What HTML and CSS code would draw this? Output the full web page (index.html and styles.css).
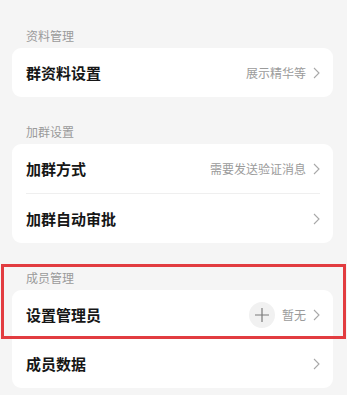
FILE: index.html
```html
<!DOCTYPE html>
<html lang="zh">
<head>
<meta charset="utf-8">
<link rel="stylesheet" href="styles.css">
</head>
<body>
<div class="page">
  <section class="section">
    <div class="label">资料管理</div>
    <div class="card">
      <div class="row">
        <span class="title">群资料设置</span>
        <span class="right"><span class="value">展示精华等</span><svg class="chev" viewBox="0 0 7 12"><path d="M1 1l5 5-5 5"/></svg></span>
      </div>
    </div>
  </section>
  <section class="section">
    <div class="label">加群设置</div>
    <div class="card">
      <div class="row">
        <span class="title">加群方式</span>
        <span class="right"><span class="value">需要发送验证消息</span><svg class="chev" viewBox="0 0 7 12"><path d="M1 1l5 5-5 5"/></svg></span>
      </div>
      <div class="divider"></div>
      <div class="row">
        <span class="title">加群自动审批</span>
        <span class="right"><svg class="chev" viewBox="0 0 7 12"><path d="M1 1l5 5-5 5"/></svg></span>
      </div>
    </div>
  </section>
  <section class="section highlighted">
    <div class="label">成员管理</div>
    <div class="card">
      <div class="row">
        <span class="title">设置管理员</span>
        <span class="right">
          <span class="plus"><svg viewBox="0 0 26 26"><path d="M13 6v14M6 13h14"/></svg></span>
          <span class="value">暂无</span><svg class="chev" viewBox="0 0 7 12"><path d="M1 1l5 5-5 5"/></svg>
        </span>
      </div>
      <div class="row">
        <span class="title">成员数据</span>
        <span class="right"><svg class="chev" viewBox="0 0 7 12"><path d="M1 1l5 5-5 5"/></svg></span>
      </div>
    </div>
  </section>
</div>
</body>
</html>
```
FILE: styles.css
```css
html, body {
  margin: 0;
  padding: 0;
  background: #ffffff;
}
body {
  width: 356px;
  height: 395px;
  overflow: hidden;
  font-family: "Noto Sans CJK SC", "Noto Sans", sans-serif;
}
.page {
  width: 347px;
  box-sizing: border-box;
  padding: 1px 14px 20px 12px;
  background: #f5f5f5;
}
.section {
  position: relative;
}
.label {
  height: 47px;
  box-sizing: border-box;
  padding: 0 0 2px 14px;
  display: flex;
  align-items: flex-end;
  font-size: 12px;
  line-height: 20px;
  color: #9a9a9a;
}
.card {
  background: #ffffff;
  border-radius: 9px;
}
.row {
  height: 49px;
  display: flex;
  align-items: center;
  justify-content: space-between;
  padding: 0 13px 0 14px;
}
.title {
  font-size: 15px;
  font-weight: 700;
  color: #161616;
}
.right {
  display: flex;
  align-items: center;
}
.value {
  font-size: 12px;
  color: #9b9b9b;
}
.chev {
  width: 7px;
  height: 12px;
  margin-left: 7px;
  fill: none;
  stroke: #a8a8a8;
  stroke-width: 1.1;
}
.divider {
  height: 1px;
  background: #efefef;
  margin: 0 13px 0 14px;
}
.plus {
  width: 26px;
  height: 26px;
  border-radius: 50%;
  background: #f1f1f1;
  margin-right: 7px;
  display: flex;
}
.plus svg {
  width: 26px;
  height: 26px;
  fill: none;
  stroke: #7a7a7a;
  stroke-width: 1.2;
}
.highlighted::after {
  content: "";
  position: absolute;
  left: -11px;
  top: 21px;
  width: 339px;
  height: 69px;
  border: 3px solid #e23c40;
  pointer-events: none;
}
```
